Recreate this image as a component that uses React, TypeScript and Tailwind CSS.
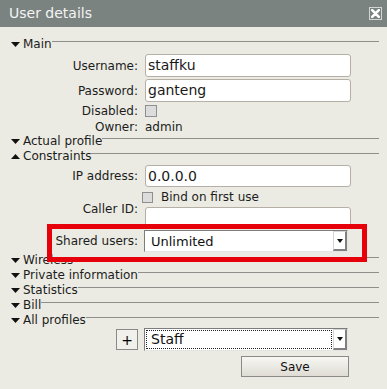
import type { ReactNode } from 'react';

function Triangle({ up }: { up?: boolean }) {
    return (
        <svg width="9" height="5" viewBox="0 0 9 5" className="shrink-0">
            <polygon points={up ? '0,5 9,5 4.5,0' : '0,0 9,0 4.5,5'} fill="#111" />
        </svg>
    );
}

function Section({ title, up }: { title: string; up?: boolean }) {
    return (
        <div className="flex items-center h-[15px] pl-[11px] pr-[8px]">
            <Triangle up={up} />
            <span className="ml-[3px] text-[12px] leading-[15px] text-[#1c1c1c] whitespace-nowrap">{title}</span>
            <div className="flex-1 h-px bg-[#8e8e8a] mb-[6px]" />
        </div>
    );
}

function Label({ children, className = '' }: { children: ReactNode; className?: string }) {
    return (
        <div className={`w-[138px] shrink-0 text-right text-[12px] leading-[14px] text-[#1c1c1c] ${className}`}>
            {children}
        </div>
    );
}

function TextInput({ value, h = 'h-[23px]' }: { value?: string; h?: string }) {
    return (
        <div
            className={`ml-[7px] w-[206px] ${h} rounded-[3px] border border-[#b5afa5] bg-white px-[2px] text-[14px] leading-[21px] text-[#1a1a1a]`}
        >
            {value}
        </div>
    );
}

function Checkbox({ size = 'w-[12px] h-[12px]' }: { size?: string }) {
    return <div className={`${size} shrink-0 border border-[#8f8f8f] bg-[#dcdcdc]`} />;
}

function Combo({ value, focused, h, text }: { value: string; focused?: boolean; h: string; text: string }) {
    return (
        <div
            className={`ml-[6px] flex w-[204px] ${h} border-t border-l border-[#7c7c7c] border-r-[#e4e4e4] border-b-[#e4e4e4] border-r border-b bg-white`}
        >
            <div className="flex-1 p-[1px]">
                <div
                    className={`h-full pl-[4px] ${text} text-[#111] ${focused ? 'border border-dotted border-[#222]' : 'border border-transparent'}`}
                >
                    {value}
                </div>
            </div>
            <div className="w-[14px] flex items-center justify-center border-l border-t border-[#d6d6d6] border-r-2 border-b-2 border-r-[#808080] border-b-[#808080] bg-white">
                <svg width="6" height="4" viewBox="0 0 6 4">
                    <polygon points="0,0 6,0 3,4" fill="#111" />
                </svg>
            </div>
        </div>
    );
}

export default function App() {
    return (
        <div className="relative w-[387px] h-[389px] overflow-hidden bg-[#ebebe3] font-['DejaVu_Sans',Verdana,sans-serif]">
            <div className="flex items-center justify-between h-[27px] bg-[#7a8380] pl-[9px] pr-[5px]">
                <span className="text-[14px] text-[#f4f4f4]">User details</span>
                <div className="w-[13px] h-[13px] border border-[#d4d6d5] flex items-center justify-center">
                    <svg width="9" height="9" viewBox="0 0 9 9">
                        <path d="M1.2 1.2 L7.8 7.8 M7.8 1.2 L1.2 7.8" stroke="#fff" strokeWidth="2.6" strokeLinecap="round" />
                    </svg>
                </div>
            </div>

            <div className="pt-[10px]">
                <Section title="Main" />
                <div className="mt-[2px] flex items-center">
                    <Label>Username:</Label>
                    <TextInput value="staffku" />
                </div>
                <div className="mt-[2px] flex items-center">
                    <Label>Password:</Label>
                    <TextInput value="ganteng" />
                </div>
                <div className="mt-[2px] flex items-center h-[14px]">
                    <Label>Disabled:</Label>
                    <div className="ml-[7px]">
                        <Checkbox />
                    </div>
                </div>
                <div className="mt-[2px] flex items-center h-[14px]">
                    <Label>Owner:</Label>
                    <span className="ml-[7px] text-[12px] leading-[14px] text-[#1c1c1c]">admin</span>
                </div>

                <Section title="Actual profile" />
                <Section title="Constraints" up />
                <div className="mt-[1px] flex items-center">
                    <Label>IP address:</Label>
                    <TextInput value="0.0.0.0" h="h-[22px]" />
                </div>
                <div className="mt-[3px] flex items-center h-[14px] pl-[142px]">
                    <Checkbox size="w-[11px] h-[11px]" />
                    <span className="ml-[8px] text-[12px] leading-[14px] text-[#1c1c1c]">Bind on first use</span>
                </div>
                <div className="mt-[3px] flex items-start">
                    <Label className="-mt-[5px]">Caller ID:</Label>
                    <TextInput h="h-[22px]" />
                </div>
                <div className="mt-[1px] flex items-center">
                    <Label>Shared users:</Label>
                    <Combo value="Unlimited" h="h-[22px]" text="text-[13px] leading-[18px]" />
                </div>

                <div className="mt-[1px]">
                    <Section title="Wireless" />
                    <Section title="Private information" />
                    <Section title="Statistics" />
                    <Section title="Bill" />
                    <Section title="All profiles" />
                </div>

                <div className="flex items-start pl-[116px]">
                    <div className="mt-[1px] w-[22px] h-[21px] border border-[#8a8a86] bg-[#f1f0ea] flex items-center justify-center text-[14px] leading-none text-black">
                        +
                    </div>
                    <Combo value="Staff" focused h="h-[23px]" text="text-[14px] leading-[17px]" />
                </div>
                <div className="mt-[5px] pl-[241px]">
                    <div className="w-[108px] h-[21px] border border-[#8a8a86] bg-gradient-to-b from-[#f7f7f3] to-[#dedcd4] flex items-center justify-center text-[12px] text-[#111]">
                        Save
                    </div>
                </div>
            </div>

            <div className="absolute left-[47px] top-[224px] w-[320px] h-[38px] border-[5px] border-[#e5000a]" />
        </div>
    );
}
